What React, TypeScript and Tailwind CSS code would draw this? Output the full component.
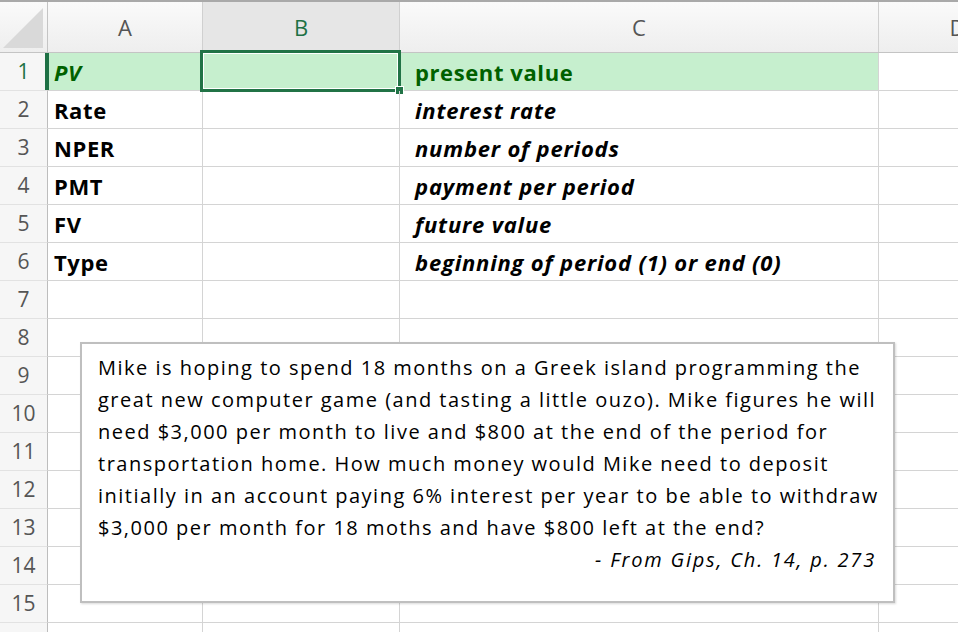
import React from "react";

const cols = [
  { key: "A", w: 155 },
  { key: "B", w: 197 },
  { key: "C", w: 479 },
  { key: "D", w: 158 },
];

const rows: { a: string; c: string }[] = [
  { a: "PV", c: "present value" },
  { a: "Rate", c: "interest rate" },
  { a: "NPER", c: "number of periods" },
  { a: "PMT", c: "payment per period" },
  { a: "FV", c: "future value" },
  { a: "Type", c: "beginning of period (1) or end (0)" },
];

const lines = [
  "Mike is hoping to spend 18 months on a Greek island programming the",
  "great new computer game (and tasting a little ouzo). Mike figures he will",
  "need $3,000 per month to live and $800 at the end of the period for",
  "transportation home. How much money would Mike need to deposit",
  "initially in an account paying 6% interest per year to be able to withdraw",
  "$3,000 per month for 18 moths and have $800 left at the end?",
];

export default function App() {
  const font = { fontFamily: "'Open Sans', sans-serif" };
  const allRows = Array.from({ length: 16 }, (_, i) => i + 1);
  return (
    <div className="relative w-[958px] h-[632px] overflow-hidden bg-white" style={font}>
      {/* header row */}
      <div className="flex h-[53px] border-t-2 border-[#a9a9a9] border-b border-b-[#c4c4c4] bg-gradient-to-b from-[#fafafa] to-[#eeeeee]">
        <div className="relative w-[48px] shrink-0 border-r border-[#c4c4c4]">
          <div className="absolute right-[4px] bottom-[4px] w-0 h-0 border-l-[40px] border-l-transparent border-b-[40px] border-b-[#d9d9d9]" />
        </div>
        {cols.map((c) => (
          <div
            key={c.key}
            className={`shrink-0 flex items-center justify-center border-r border-[#d0d0d0] text-[22px] ${
              c.key === "B" ? "bg-[#e6e6e6] text-[#1e7145]" : "text-[#555555]"
            }`}
            style={{ width: c.w }}
          >
            {c.key}
          </div>
        ))}
      </div>
      {/* body rows */}
      {allRows.map((r) => {
        const data = rows[r - 1];
        const sel = r === 1;
        return (
          <div key={r} className="flex h-[38px]">
            <div
              className={`relative w-[48px] shrink-0 flex items-center justify-center border-r border-[#bdbdbd] border-b border-b-[#e2e2e2] bg-[#f6f6f6] text-[21px] ${
                sel ? "text-[#1e7145]" : "text-[#555555]"
              }`}
            >
              {r}
              {sel && <div className="absolute right-[-2px] top-0 h-full w-[4px] bg-[#1e7145]" />}
            </div>
            <div
              className={`w-[155px] shrink-0 flex items-center pl-[6px] pt-[2px] border-r border-b border-[#d4d4d4] text-[22px] font-bold tracking-[0.6px] whitespace-nowrap ${
                sel ? "bg-[#c6efce] text-[#006100] italic" : "text-black"
              }`}
            >
              {data?.a}
            </div>
            <div
              className={`relative w-[197px] shrink-0 border-r border-b border-[#d4d4d4] ${sel ? "bg-[#c6efce]" : ""}`}
            >
              {sel && (
                <>
                  <div className="absolute left-[-3px] top-[-3px] right-[-2px] bottom-[-2px] border-[3px] border-[#217346]">
                    <div className="w-full h-full border border-white" />
                  </div>
                  <div className="absolute right-[-5px] bottom-[-5px] w-[9px] h-[9px] bg-[#217346] border border-white" />
                </>
              )}
            </div>
            <div
              className={`w-[479px] shrink-0 flex items-center pl-[15px] pt-[2px] border-r border-b border-[#d4d4d4] text-[22px] font-bold whitespace-nowrap ${
                sel ? "bg-[#c6efce] text-[#006100] tracking-[0.6px]" : "text-black italic tracking-[0.8px]"
              }`}
            >
              {data?.c}
            </div>
            <div className="w-[158px] shrink-0 border-r border-b border-[#d4d4d4]" />
          </div>
        );
      })}
      {/* text box */}
      <div className="absolute left-[80px] top-[342px] w-[815px] h-[261px] bg-white border-2 border-[#bfbfbf] shadow-[1px_1px_2px_rgba(0,0,0,0.15)] pl-[16px] pr-[17px] pt-[8px] text-[20px] leading-[32px] text-black tracking-[1.5px] whitespace-nowrap">
        {lines.map((l) => (
          <div key={l}>{l}</div>
        ))}
        <div className="text-right italic tracking-[1.8px]">- From Gips, Ch. 14, p. 273</div>
      </div>
    </div>
  );
}
